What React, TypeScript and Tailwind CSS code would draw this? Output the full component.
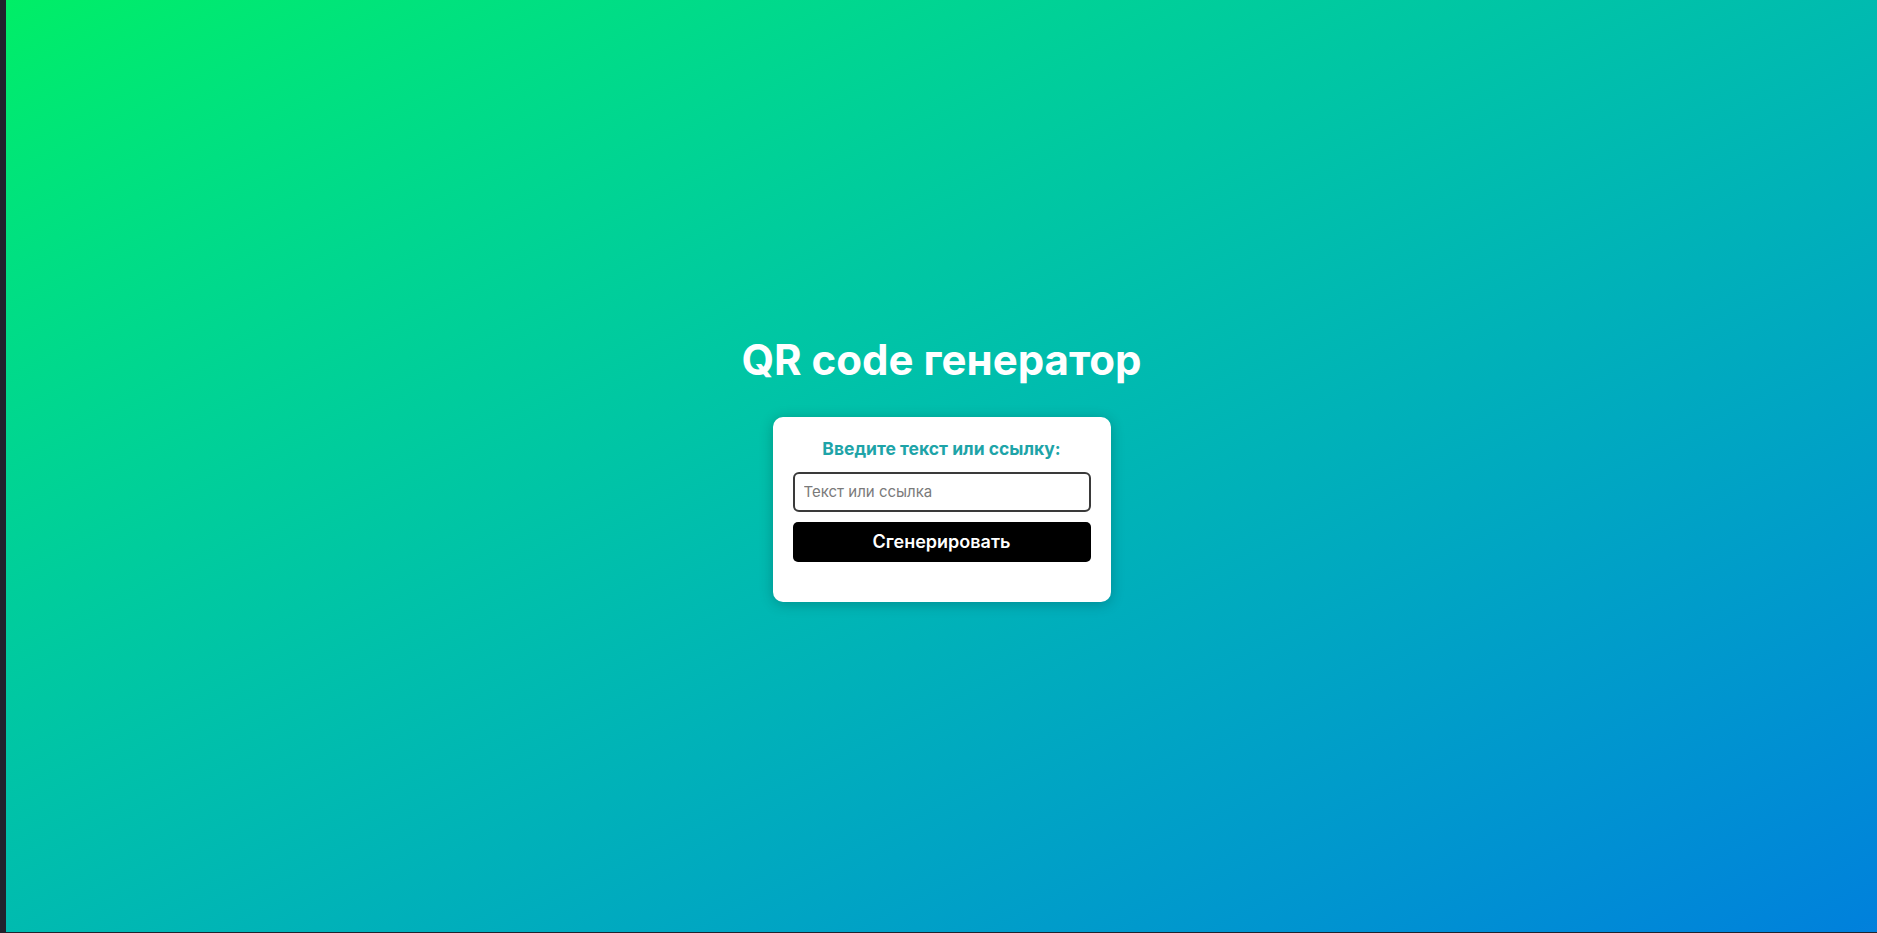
import React from "react";

export default function App() {
  return (
    <div className="flex h-[933px] w-full bg-[#21232d]" style={{ fontFamily: "Inter, 'Noto Sans', sans-serif" }}>
      <div className="w-[6px] shrink-0 bg-[#21232d]" />
      <div className="flex h-[932px] flex-1 flex-col items-center justify-center bg-gradient-to-br from-[#00ee66] to-[#0280dc]">
        <h1 className="mb-[32px] mt-[4px] text-[42px] font-bold leading-[50px] tracking-[0px] text-white">
          QR code генератор
        </h1>
        <div className="flex w-[338px] flex-col rounded-[10px] bg-white px-5 pb-10 pt-5 shadow-[0_2px_14px_rgba(0,0,0,0.22)]">
          <label className="text-center text-[17.5px] font-bold leading-[24px] text-[#1ea4a8]">
            Введите текст или ссылку:
          </label>
          <input
            type="text"
            placeholder="Текст или ссылка"
            className="mt-[11px] h-[40px] w-full rounded-[6px] border-2 border-[#3a3a3a] px-[9px] text-[15px] text-[#333] outline-none placeholder:text-[#7a7a7a]"
          />
          <button className="mt-[10px] h-[40px] w-full rounded-[5px] bg-black text-[18px] font-semibold text-white">
            Сгенерировать
          </button>
        </div>
      </div>
    </div>
  );
}
